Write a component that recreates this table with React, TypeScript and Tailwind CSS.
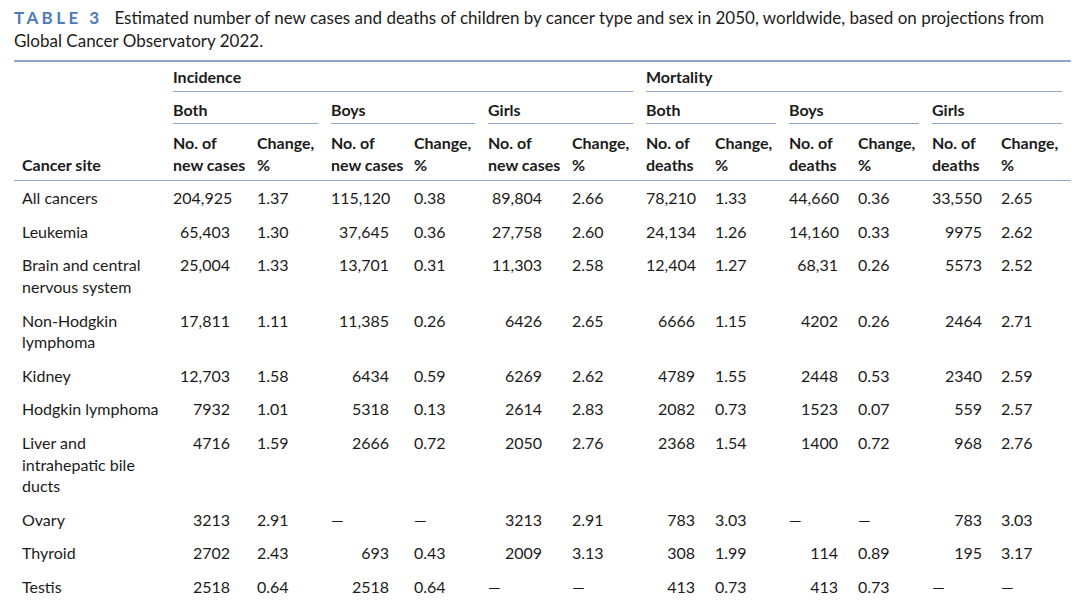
const COLS =
  "grid grid-cols-[159px_84px_74px_83px_74px_84px_74px_69px_74px_69px_74px_69px_70px]";

type Row = { site: string; values: string[] };

const ROWS: Row[] = [
  { site: "All cancers", values: ["204,925", "1.37", "115,120", "0.38", "89,804", "2.66", "78,210", "1.33", "44,660", "0.36", "33,550", "2.65"] },
  { site: "Leukemia", values: ["65,403", "1.30", "37,645", "0.36", "27,758", "2.60", "24,134", "1.26", "14,160", "0.33", "9975", "2.62"] },
  { site: "Brain and central nervous system", values: ["25,004", "1.33", "13,701", "0.31", "11,303", "2.58", "12,404", "1.27", "68,31", "0.26", "5573", "2.52"] },
  { site: "Non-Hodgkin lymphoma", values: ["17,811", "1.11", "11,385", "0.26", "6426", "2.65", "6666", "1.15", "4202", "0.26", "2464", "2.71"] },
  { site: "Kidney", values: ["12,703", "1.58", "6434", "0.59", "6269", "2.62", "4789", "1.55", "2448", "0.53", "2340", "2.59"] },
  { site: "Hodgkin lymphoma", values: ["7932", "1.01", "5318", "0.13", "2614", "2.83", "2082", "0.73", "1523", "0.07", "559", "2.57"] },
  { site: "Liver and intrahepatic bile ducts", values: ["4716", "1.59", "2666", "0.72", "2050", "2.76", "2368", "1.54", "1400", "0.72", "968", "2.76"] },
  { site: "Ovary", values: ["3213", "2.91", "—", "—", "3213", "2.91", "783", "3.03", "—", "—", "783", "3.03"] },
  { site: "Thyroid", values: ["2702", "2.43", "693", "0.43", "2009", "3.13", "308", "1.99", "114", "0.89", "195", "3.17"] },
  { site: "Testis", values: ["2518", "0.64", "2518", "0.64", "—", "—", "413", "0.73", "413", "0.73", "—", "—"] },
];

// right padding of each "No. of" column, so the numbers line up like the print
const NUM_PAD = ["pr-[27px]", "pr-[25px]", "pr-[30px]", "pr-[20px]", "pr-[20px]", "pr-[19px]"];

function Cell({ value, index }: { value: string; index: number }) {
  const isCount = index % 2 === 0;
  if (value === "—") {
    return <div className="py-[6px] text-left">{value}</div>;
  }
  return (
    <div className={`py-[6px] ${isCount ? `text-right ${NUM_PAD[index / 2]}` : "text-left"}`}>
      {value}
    </div>
  );
}

export default function App() {
  const groups = ["Both", "Boys", "Girls", "Both", "Boys", "Girls"];

  return (
    <div className="h-[604px] w-[1080px] overflow-hidden bg-white font-['Lato',sans-serif] text-[16px] text-[#1b1b1b]">
      <p className="px-[14px] pt-[6px] text-[17px] leading-[23px]">
        <span className="mr-[12px] font-bold tracking-[0.2em] text-[#4d7cb9]">TABLE 3</span>
        Estimated number of new cases and deaths of children by cancer type and sex in 2050, worldwide, based on projections from
        Global Cancer Observatory 2022.
      </p>

      <div className="mx-[14px] mt-[8px] w-[1057px] border-t-2 border-[#88a6cf]">
        <div className={`${COLS} border-b border-[#88a6cf] font-bold`}>
          <div className="row-span-3 self-end pb-[5px] pl-2 leading-[21.6px]">Cancer site</div>
          <div className="col-span-6 mr-[13px] border-b border-[#88a6cf] pt-[4px] pb-[3px] leading-[22px]">
            Incidence
          </div>
          <div className="col-span-6 mr-[9px] border-b border-[#88a6cf] pt-[4px] pb-[3px] leading-[22px]">
            Mortality
          </div>
          {groups.map((g, i) => (
            <div
              key={i}
              className={`col-span-2 border-b border-[#88a6cf] pt-[7px] pb-[2px] leading-[22px] ${
                i === 5 ? "mr-[9px]" : "mr-[13px]"
              }`}
            >
              {g}
            </div>
          ))}
          {groups.map((_, i) => (
            <div key={i} className="contents">
              <div className="pt-[8px] pb-[5px] leading-[21.6px]">
                No. of
                <br />
                {i < 3 ? "new cases" : "deaths"}
              </div>
              <div className="pt-[8px] pb-[5px] leading-[21.6px]">
                Change,
                <br />%
              </div>
            </div>
          ))}
        </div>

        <div className={`${COLS} leading-[21.6px]`}>
          {ROWS.map((row) => (
            <div key={row.site} className="contents">
              <div className="py-[6px] pr-[6px] pl-2">{row.site}</div>
              {row.values.map((v, i) => (
                <Cell key={i} value={v} index={i} />
              ))}
            </div>
          ))}
        </div>
      </div>
    </div>
  );
}
